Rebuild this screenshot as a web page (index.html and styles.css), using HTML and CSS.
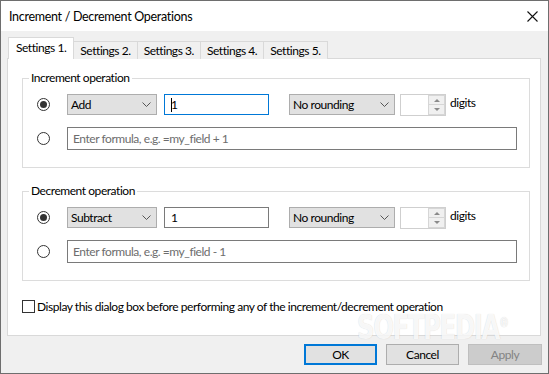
FILE: index.html
```html
<!DOCTYPE html>
<html lang="en">
<head>
<meta charset="UTF-8">
<title>Increment / Decrement Operations</title>
<link rel="stylesheet" href="styles.css">
</head>
<body>
<div class="window">
    <!-- Title bar -->
    <div class="titlebar">
        <span class="title">Increment / Decrement Operations</span>
        <svg class="close" width="11" height="11" viewBox="0 0 11 11"><path d="M0.5 0.5 L10.5 10.5 M10.5 0.5 L0.5 10.5" stroke="#111" stroke-width="1.1" fill="none"/></svg>
    </div>

    <div class="client">
        <!-- Tabs -->
        <div class="tabs">
            <div class="tab active">Settings 1.</div>
            <div class="tab">Settings 2.</div>
            <div class="tab">Settings 3.</div>
            <div class="tab">Settings 4.</div>
            <div class="tab">Settings 5.</div>
        </div>

        <div class="panel">
            <fieldset class="group">
                <legend>Increment operation</legend>
                <div class="group-body">
                    <div class="row">
                        <input type="radio" name="inc" checked>
                        <div class="combo">Add<svg class="chevron" width="9" height="5" viewBox="0 0 9 5"><path d="M0.5 0.5 L4.5 4.5 L8.5 0.5" stroke="#555" fill="none"/></svg></div>
                        <div class="field focused"><span class="caret"></span>1</div>
                        <div class="combo round">No rounding<svg class="chevron" width="9" height="5" viewBox="0 0 9 5"><path d="M0.5 0.5 L4.5 4.5 L8.5 0.5" stroke="#555" fill="none"/></svg></div>
                        <div class="spin">
                            <span class="spin-field"></span>
                            <span class="spin-btns"><span class="spin-up"></span><span class="spin-down"></span></span>
                        </div>
                        <span class="unit">digits</span>
                    </div>
                    <div class="row formula-row">
                        <input type="radio" name="inc">
                        <input class="formula" type="text" placeholder="Enter formula, e.g. =my_field + 1">
                    </div>
                </div>
            </fieldset>

            <fieldset class="group second">
                <legend>Decrement operation</legend>
                <div class="group-body">
                    <div class="row">
                        <input type="radio" name="dec" checked>
                        <div class="combo">Subtract<svg class="chevron" width="9" height="5" viewBox="0 0 9 5"><path d="M0.5 0.5 L4.5 4.5 L8.5 0.5" stroke="#555" fill="none"/></svg></div>
                        <div class="field">1</div>
                        <div class="combo round">No rounding<svg class="chevron" width="9" height="5" viewBox="0 0 9 5"><path d="M0.5 0.5 L4.5 4.5 L8.5 0.5" stroke="#555" fill="none"/></svg></div>
                        <div class="spin">
                            <span class="spin-field"></span>
                            <span class="spin-btns"><span class="spin-up"></span><span class="spin-down"></span></span>
                        </div>
                        <span class="unit">digits</span>
                    </div>
                    <div class="row formula-row">
                        <input type="radio" name="dec">
                        <input class="formula" type="text" placeholder="Enter formula, e.g. =my_field - 1">
                    </div>
                </div>
            </fieldset>

            <label class="check">
                <input type="checkbox">
                <span>Display this dialog box before performing any of the increment/decrement operation</span>
            </label>
        </div>

        <!-- Dialog buttons -->
        <div class="buttons">
            <button class="btn default">OK</button>
            <button class="btn">Cancel</button>
            <button class="btn" disabled>Apply</button>
        </div>
    </div>

    <span class="watermark">SOFTPEDIA<sup>®</sup></span>
</div>
</body>
</html>
```

FILE: styles.css
```css
body {
    margin: 0;
    font-family: 'Lato', 'Noto Sans', sans-serif;
    font-size: 12px;
    letter-spacing: -0.45px;
    color: #000;
}

.window {
    position: relative;
    width: 549px;
    height: 374px;
    box-sizing: border-box;
    border: 1px solid #6e6e6e;
    background-color: #f0f0f0;
    display: flex;
    flex-direction: column;
    overflow: hidden;
}

/* Title bar */
.titlebar {
    height: 30px;
    flex: none;
    background-color: #fff;
    display: flex;
    align-items: center;
    justify-content: space-between;
    padding: 0 10px 0 8px;
}

.title {
    font-size: 12.5px;
    letter-spacing: -0.3px;
}

.close {
    margin-top: 1px;
}

.client {
    flex: 1;
    display: flex;
    flex-direction: column;
    padding-top: 7px;
}

/* Tabs */
.tabs {
    display: flex;
    align-items: flex-end;
    height: 21px;
    margin: 0 0 -1px 7px;
    position: relative;
    z-index: 1;
}

.tab {
    height: 17px;
    line-height: 17px;
    padding: 0 6px;
    border: 1px solid #d9d9d9;
    border-bottom: none;
    margin-left: -1px;
    background-color: #f0f0f0;
}

.tab:first-child {
    margin-left: 0;
}

.tab.active {
    height: 21px;
    line-height: 19px;
    padding: 0 7px;
    background-color: #fff;
    position: relative;
    z-index: 2;
}

.panel {
    height: 278px;
    box-sizing: border-box;
    margin: 0 7px 0 6px;
    background-color: #fff;
    border: 1px solid #d9d9d9;
    padding: 11px 10px 0 14px;
}

/* Group boxes */
.group {
    margin: 0;
    padding: 0;
    border: 1px solid #dcdcdc;
    min-width: 0;
}

.group.second {
    margin-top: 15px;
}

.group legend {
    margin-left: 6px;
    padding: 0 2px;
    line-height: 16px;
}

.group-body {
    padding: 8px 12px 17px 14px;
}

.row {
    display: flex;
    align-items: center;
    height: 21px;
}

.row.formula-row {
    height: 23px;
    margin-top: 12px;
}

.row input[type="radio"] {
    appearance: none;
    margin: 0 17px 0 0;
    width: 13px;
    height: 13px;
    border: 1px solid #333;
    border-radius: 50%;
    background-color: #fff;
    box-sizing: border-box;
    position: relative;
    flex: none;
}

.row input[type="radio"]:checked::after {
    content: '';
    position: absolute;
    left: 2px;
    top: 2px;
    width: 7px;
    height: 7px;
    border-radius: 50%;
    background-color: #333;
}

.combo {
    width: 90px;
    height: 21px;
    box-sizing: border-box;
    background-color: #e1e1e1;
    border: 1px solid #adadad;
    padding: 0 5px 0 3px;
    display: flex;
    align-items: center;
    justify-content: space-between;
    flex: none;
}

.combo.round {
    width: 106px;
    margin-left: 20px;
}

.field {
    width: 105px;
    height: 21px;
    box-sizing: border-box;
    border: 1px solid #7a7a7a;
    margin-left: 7px;
    padding-left: 6px;
    display: flex;
    align-items: center;
    flex: none;
}

.field.focused {
    border-color: #0078d7;
}

.caret {
    width: 1px;
    height: 14px;
    background-color: #000;
    margin-right: -1px;
}

/* Spin box */
.spin {
    width: 46px;
    height: 22px;
    box-sizing: border-box;
    margin-left: 5px;
    border: 1px solid #cfcfcf;
    display: flex;
    flex: none;
}

.spin-field {
    flex: 1;
}

.spin-btns {
    width: 17px;
    display: flex;
    flex-direction: column;
    background-color: #fff;
}

.spin-up, .spin-down {
    flex: 1;
    background-color: #f0f0f0;
    border: 1px solid #d6d6d6;
    position: relative;
}

.spin-down {
    border-top: none;
}

.spin-up::after, .spin-down::after {
    content: '';
    position: absolute;
    left: 5px;
    border-left: 3px solid transparent;
    border-right: 3px solid transparent;
}

.spin-up::after {
    top: 3px;
    border-bottom: 3px solid #8a8a8a;
}

.spin-down::after {
    top: 3px;
    border-top: 3px solid #8a8a8a;
}

.unit {
    margin-left: 4px;
    margin-top: -4px;
}

.formula {
    width: 450px;
    height: 23px;
    box-sizing: border-box;
    border: 1px solid #7a7a7a;
    padding: 0 5px;
    font: inherit;
    letter-spacing: inherit;
    outline: none;
}

.formula::placeholder {
    color: #6d6d6d;
}

/* Checkbox */
.check {
    display: flex;
    align-items: center;
    margin-top: 17px;
    height: 16px;
}

.check input {
    appearance: none;
    margin: 0 2px 0 0;
    width: 13px;
    height: 13px;
    border: 1px solid #333;
    background-color: #fff;
    box-sizing: border-box;
}

/* Buttons */
.buttons {
    display: flex;
    justify-content: flex-end;
    gap: 9px;
    margin: 8px 6px 0 0;
}

.btn {
    width: 73px;
    height: 21px;
    padding: 0;
    font: inherit;
    letter-spacing: inherit;
    color: #000;
    background-color: #e1e1e1;
    border: 1px solid #adadad;
}

.btn.default {
    border: 2px solid #0078d7;
}

.btn:disabled {
    width: 74px;
    background-color: #cccccc;
    border-color: #bfbfbf;
    color: #838383;
}

/* Screenshot watermark */
.watermark {
    position: absolute;
    left: 356px;
    top: 312px;
    font-family: 'DejaVu Sans', sans-serif;
    font-weight: bold;
    font-size: 34px;
    line-height: 28px;
    letter-spacing: -2px;
    color: rgba(255, 255, 255, 0.85);
    text-shadow: 0 0 1px rgba(0, 0, 0, 0.18);
    transform: scaleX(0.72);
    transform-origin: left top;
    pointer-events: none;
}

.watermark sup {
    font-size: 14px;
    line-height: 0;
}
```
